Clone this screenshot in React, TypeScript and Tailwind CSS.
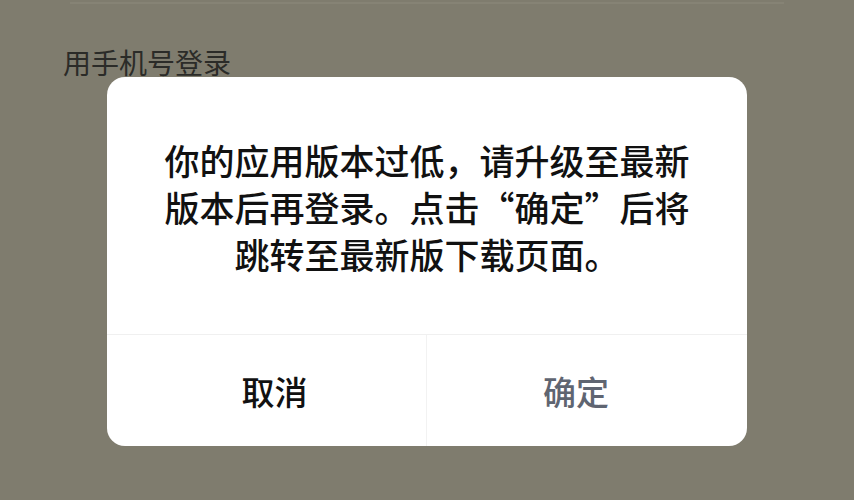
export default function App() {
  return (
    <div
      className="relative h-[500px] w-[854px] overflow-hidden bg-[#7f7c6e]"
      style={{ fontFamily: '"Noto Sans CJK SC", "Noto Sans", sans-serif' }}
    >
      <div className="mx-[70px] mt-[2px] h-[2px] bg-[#868375]" />
      <div className="pl-[63px] pt-[38px] text-[28px] leading-[40px] text-[#2b2b28]">
        用手机号登录
      </div>

      <div className="absolute inset-0 flex justify-center pt-[77px]">
        <div className="flex h-[369px] w-[640px] flex-col overflow-hidden rounded-[18px] bg-white">
          <div className="flex flex-1 items-center justify-center border-b border-[#f0f0f0] pt-[1px]">
            <p className="text-center text-[35px] font-medium leading-[47px] text-[#111111]">
              你的应用版本过低，请升级至最新
              <br />
              版本后再登录。点击“确定”后将
              <br />
              跳转至最新版下载页面。
            </p>
          </div>
          <div className="flex h-[111px]">
            <button className="flex w-1/2 flex-none items-center justify-center border-r border-[#f2f2f2] pl-[16px] pt-[2px] text-[33px] font-medium text-[#111111]">
              取消
            </button>
            <button className="flex w-1/2 flex-none items-center justify-center pr-[22px] pt-[2px] text-[33px] font-medium text-[#5f6571]">
              确定
            </button>
          </div>
        </div>
      </div>
    </div>
  );
}
